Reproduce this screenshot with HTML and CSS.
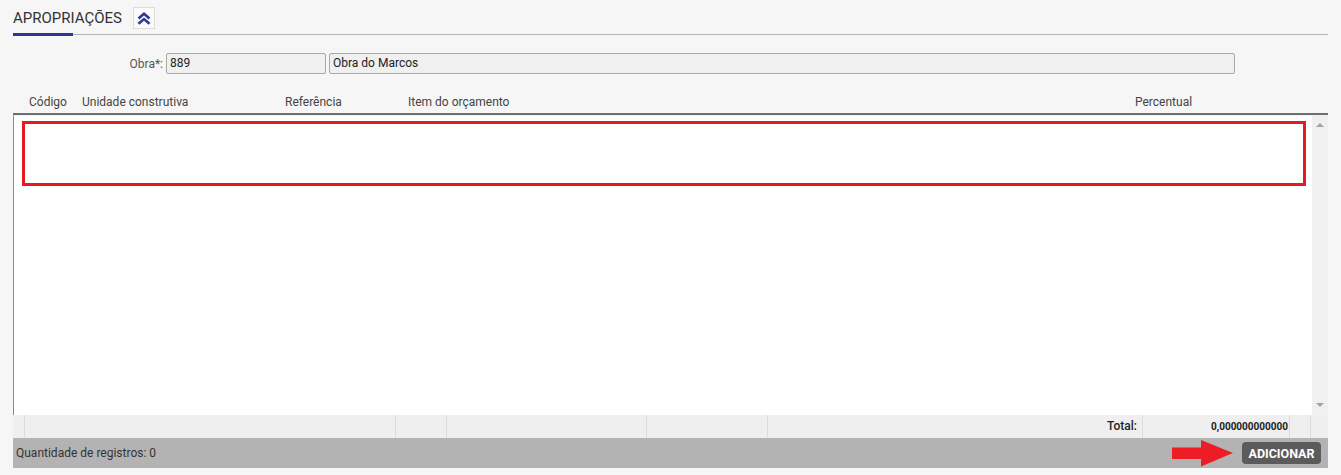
FILE: index.html
```html
<!DOCTYPE html>
<html lang="pt-BR">
<head>
<meta charset="utf-8">
<title>Apropriações</title>
<link rel="stylesheet" href="styles.css">
</head>
<body>
<div class="page">
  <div class="section-head">
    <div class="title-row">
      <span class="title">APROPRIAÇÕES</span>
      <span class="collapse-btn">
        <svg width="14" height="13" viewBox="0 0 14 13"><polyline points="1.5,6.5 7,1.8 12.5,6.5" fill="none" stroke="#2b3990" stroke-width="2.6"/><polyline points="1.5,11.8 7,7.1 12.5,11.8" fill="none" stroke="#2b3990" stroke-width="2.6"/></svg>
      </span>
    </div>
    <div class="tabline"><span class="tab-active"></span><span class="tab-rest"></span></div>
  </div>

  <div class="field-row">
    <label class="field-label">Obra*:</label>
    <div class="input code">889</div>
    <div class="input name">Obra do Marcos</div>
  </div>

  <div class="grid">
    <div class="grid-head">
      <span class="col c1">Código</span>
      <span class="col c2">Unidade construtiva</span>
      <span class="col c3">Referência</span>
      <span class="col c4">Item do orçamento</span>
      <span class="col c5">Percentual</span>
    </div>
    <div class="grid-body-wrap">
      <div class="grid-body">
        <div class="highlight"></div>
      </div>
      <div class="scrollbar">
        <span class="arrow up"></span>
        <span class="arrow down"></span>
      </div>
    </div>
    <div class="grid-foot">
      <span class="fc f1"></span>
      <span class="fc f2"></span>
      <span class="fc f3"></span>
      <span class="fc f4"></span>
      <span class="fc f5"></span>
      <span class="fc f6 total-label">Total:</span>
      <span class="fc f7 total-value">0,000000000000</span>
      <span class="fc f8"></span>
      <span class="fc f9"></span>
    </div>
    <div class="grid-bar">
      <span class="count">Quantidade de registros: 0</span>
      <div class="actions">
        <svg class="red-arrow" width="62" height="27" viewBox="0 0 62 27"><polygon points="0,7.5 29,7.5 29,0 61,13 29,26.5 29,19 0,19" fill="#ee1c25"/></svg>
        <button class="btn-add">ADICIONAR</button>
      </div>
    </div>
  </div>
</div>
</body>
</html>
```

FILE: styles.css
```css
* { box-sizing: border-box; }
html, body { margin: 0; padding: 0; }
body {
  background: #f6f6f6;
  font-family: Roboto, "Liberation Sans", Arial, sans-serif;
  color: #333;
  width: 1341px;
  height: 475px;
  overflow: hidden;
}
.page { padding: 0 13px; }

.section-head { padding-top: 7px; }
.title-row {
  display: flex;
  align-items: center;
  height: 22px;
  margin-bottom: 4px;
}
.title {
  font-size: 15px;
  color: #333;
}
.collapse-btn {
  margin-left: 11px;
  width: 22px;
  height: 22px;
  background: #fbfbfb;
  border: 1px solid #dcdcdc;
  display: flex;
  align-items: center;
  justify-content: center;
}
.tabline {
  display: flex;
  align-items: center;
  height: 3px;
}
.tab-active { width: 60px; height: 3px; background: #2b3990; }
.tab-rest { flex: 1; height: 1px; background: #b4b4b4; }

.field-row {
  display: flex;
  align-items: center;
  margin-top: 17px;
  height: 21px;
}
.field-label {
  width: 150px;
  text-align: right;
  font-size: 12px;
  color: #555;
  margin-right: 3px;
}
.input {
  height: 21px;
  background: #f0f0f0;
  border: 1px solid #a9a9a9;
  border-radius: 2px;
  font-size: 12px;
  color: #222;
  padding-left: 3px;
  line-height: 19px;
}
.input.code { width: 160px; }
.input.name { width: 906px; margin-left: 3px; }

.grid { margin-top: 17px; }
.grid-head {
  display: flex;
  height: 24px;
  border-bottom: 2px solid #6e6e6e;
  font-size: 12px;
  color: #444;
  line-height: 22px;
  padding-left: 16px;
}
.col.c1 { width: 53px; }
.col.c2 { width: 203px; }
.col.c3 { width: 123px; }
.col.c4 { width: 727px; }

.grid-body-wrap {
  display: flex;
  height: 300px;
}
.grid-body {
  flex: 1;
  background: #fff;
  border-left: 1px solid #8a8a8a;
  border-top: 1px solid #f2f2f2;
  padding: 5px 6px 0 8px;
}
.highlight {
  height: 65px;
  border: 3px solid #e31b23;
}
.scrollbar {
  width: 16px;
  background: #f0f0f0;
  display: flex;
  flex-direction: column;
  justify-content: space-between;
  align-items: center;
  padding: 8px 0 8px;
}
.arrow {
  width: 0;
  height: 0;
  border-left: 4px solid transparent;
  border-right: 4px solid transparent;
}
.arrow.up { border-bottom: 4px solid #a3a3a3; }
.arrow.down { border-top: 4px solid #a3a3a3; }

.grid-foot {
  display: flex;
  height: 23px;
  background: #efefef;
  font-size: 12px;
  color: #222;
  line-height: 23px;
}
.fc { border-right: 1px solid #dcdcdc; }
.f1 { width: 12px; }
.f2 { width: 371px; }
.f3 { width: 51px; }
.f4 { width: 200px; }
.f5 { width: 121px; }
.f6 { width: 375px; text-align: right; padding-right: 5px; font-weight: 500; }
.f7 { width: 147px; text-align: right; padding-right: 1px; font-size: 10px; font-weight: 700; }
.f8 { width: 21px; }
.f9 { flex: 1; border-right: none; }

.grid-bar {
  display: flex;
  align-items: center;
  justify-content: space-between;
  height: 30px;
  background: #b3b3b3;
  padding: 0 7px 0 3px;
}
.count { font-size: 12px; color: #333; }
.actions { display: flex; align-items: center; }
.red-arrow { margin-right: 8px; display: block; }
.btn-add {
  height: 22px;
  width: 79px;
  padding: 0;
  background: #5b5b5b;
  border: none;
  border-radius: 4px;
  color: #fff;
  font-family: Roboto, "Liberation Sans", Arial, sans-serif;
  font-size: 12.5px;
  font-weight: 700;
}
```
